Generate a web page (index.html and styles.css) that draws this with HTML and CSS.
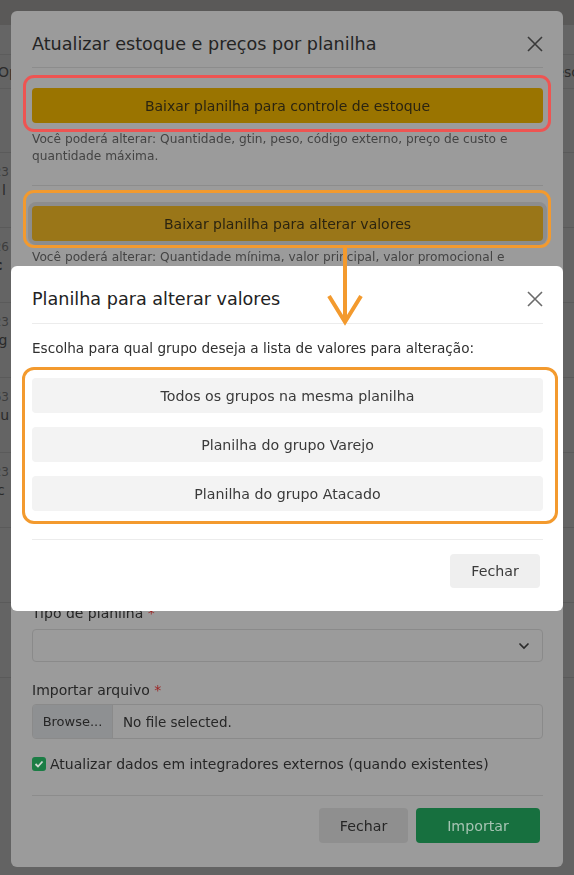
FILE: index.html
```html
<!DOCTYPE html>
<html lang="pt-BR">
<head>
<meta charset="utf-8">
<title>Atualizar estoque</title>
<link rel="stylesheet" href="styles.css">
</head>
<body>
<div class="page">
  <div class="topbar"></div>
  <div class="subbar"></div>
  <div class="thead"><span class="cell-left">Op</span><span class="cell-right">Desc</span></div>
  <div class="trow first"></div>
  <div class="trow"><span class="l1">123</span><span class="l2">de l</span></div>
  <div class="trow"><span class="l1">126</span><span class="l2 bold">Tic</span></div>
  <div class="trow"><span class="l1">123</span><span class="l2">Aug</span></div>
  <div class="trow"><span class="l1">163</span><span class="l2">AGu</span></div>
  <div class="trow"><span class="l1">123</span><span class="l2">Puc</span></div>
  <div class="trow"></div>
  <div class="trow"></div>
</div>

<div class="modal m1">
  <div class="m-header">
    <h5 class="m-title">Atualizar estoque e preços por planilha</h5>
    <svg class="x-icon" width="16" height="16" viewBox="0 0 16 16"><path d="M1 1L15 15M15 1L1 15" stroke="currentColor" stroke-width="1.6" fill="none"/></svg>
  </div>
  <div class="m1-body">
    <button class="btn-gold">Baixar planilha para controle de estoque</button>
    <p class="help">Você poderá alterar: Quantidade, gtin, peso, código externo, preço de custo e quantidade máxima.</p>
    <hr class="sep">
    <button class="btn-gold focus">Baixar planilha para alterar valores</button>
    <p class="help">Você poderá alterar: Quantidade mínima, valor principal, valor promocional e valor de custo do grupo.</p>
    <hr class="sep">
    <div class="hidden-gap"></div>
    <label class="lbl">Tipo de planilha <span class="req">*</span></label>
    <div class="select"><svg width="12" height="8" viewBox="0 0 12 8"><path d="M1.5 1.5L6 6L10.5 1.5" stroke="currentColor" stroke-width="1.6" fill="none"/></svg></div>
    <label class="lbl lbl2">Importar arquivo <span class="req">*</span></label>
    <div class="file"><span class="browse">Browse...</span><span class="nofile">No file selected.</span></div>
    <div class="check-row"><span class="check"><svg width="10" height="8" viewBox="0 0 10 8"><path d="M1.5 4L4 6.5L8.5 1.5" stroke="currentColor" stroke-width="1.8" fill="none"/></svg></span><span>Atualizar dados em integradores externos (quando existentes)</span></div>
  </div>
  <div class="m1-footer">
    <button class="btn-gray">Fechar</button>
    <button class="btn-green">Importar</button>
  </div>
</div>

<div class="modal m2">
  <div class="m-header m2-header">
    <h5 class="m-title t2">Planilha para alterar valores</h5>
    <svg class="x-icon x2" width="16" height="16" viewBox="0 0 16 16"><path d="M1 1L15 15M15 1L1 15" stroke="currentColor" stroke-width="1.6" fill="none"/></svg>
  </div>
  <div class="m2-body">
    <p class="choose">Escolha para qual grupo deseja a lista de valores para alteração:</p>
    <div class="options">
      <button class="opt">Todos os grupos na mesma planilha</button>
      <button class="opt">Planilha do grupo Varejo</button>
      <button class="opt">Planilha do grupo Atacado</button>
    </div>
  </div>
  <div class="m2-footer">
    <button class="btn-light">Fechar</button>
  </div>
</div>

<div class="mark mark-red"></div>
<div class="mark mark-orange1"></div>
<div class="mark mark-orange2"></div>
<svg class="arrow" width="40" height="80" viewBox="0 0 40 80"><path d="M20 0V74M4 49L20 75L36 49" stroke="#f39a2e" stroke-width="4" fill="none" stroke-linejoin="miter"/></svg>
</body>
</html>
```

FILE: styles.css
```css
* { box-sizing: border-box; }
html, body { margin: 0; padding: 0; }
body {
  width: 574px;
  height: 875px;
  overflow: hidden;
  font-family: "DejaVu Sans", "Open Sans", sans-serif;
  background: #636363;
  position: relative;
}
button { font-family: inherit; border: 0; cursor: pointer; }

/* background page */
.page { width: 574px; height: 875px; overflow: hidden; color: #3a3a3a; font-size: 13px; }
.topbar { height: 25px; background: #5a5958; }
.subbar { height: 30px; background: #656565; border-bottom: 1px solid #5c5c5c; }
.thead {
  height: 34px; display: flex; justify-content: space-between; align-items: center;
  border-bottom: 1px solid #5c5c5c; background: #646464; font-size: 14px; color: #2c2c2c;
}
.cell-left { margin-left: -2px; }
.cell-right { margin-right: -5px; }
.trow {
  height: 75px; border-bottom: 1px solid #5a5a5a; background: #646464;
  display: flex; flex-direction: column; padding-top: 10px; line-height: 18px;
}
.trow.first { height: 64px; }
.trow .l1 { font-size: 12px; color: #3c3c3c; margin-left: -14px; }
.trow .l2 { font-size: 14px; color: #2a2a2a; margin-left: -20px; }
.trow .l2.bold { font-weight: 700; }

/* modals */
.modal { position: fixed; left: 11px; width: 552px; border-radius: 6px; }
.m1 { top: 11px; height: 856px; background: #9b9b9b; display: flex; flex-direction: column; }
.m2 { top: 266px; height: 345px; background: #ffffff; display: flex; flex-direction: column; }

.m-header {
  height: 57px; margin: 0 20px 0 21px; border-bottom: 1px solid #8c8c8c;
  display: flex; align-items: center; justify-content: space-between; padding-top: 10px;
  flex-shrink: 0;
}
.m-title { margin: 0; font-weight: 400; font-size: 17.6px; color: #242424; line-height: 24px; }
.x-icon { color: #3a3a3a; }
.m2-header { border-bottom-color: #ececec; height: 58px; padding-top: 8px; }
.t2 { color: #222; font-size: 17.6px; }
.x2 { color: #6b6b6b; }

.m1-body { padding: 20px 20px 0 21px; display: flex; flex-direction: column; flex: 1; }
.btn-gold {
  height: 35px; width: 100%; border-radius: 4px; background: #9a7400; color: #2b2410;
  font-size: 14px; flex-shrink: 0;
}
.btn-gold.focus { background: #9a7618; box-shadow: 0 0 0 4px #8d8d8d; }
.help { margin: 8px 0 0; font-size: 12.2px; line-height: 17px; color: #444; max-width: 482px; }
.sep { border: 0; border-top: 1px solid #8c8c8c; margin: 20px 0 20px; }
.hidden-gap { height: 279px; flex-shrink: 0; }
.lbl { font-size: 14px; color: #262626; line-height: 20px; }
.req { color: #9c2424; }
.select {
  margin-top: 6px; height: 33px; border: 1px solid #8a8a8a; border-radius: 4px;
  display: flex; align-items: center; justify-content: flex-end; padding-right: 12px; color: #2a2a2a;
}
.lbl2 { margin-top: 18px; }
.file {
  margin-top: 4px; height: 35px; border: 1px solid #8a8a8a; border-radius: 4px;
  display: flex; align-items: stretch; overflow: hidden; font-size: 13.5px; color: #262626;
}
.browse { width: 80px; background: #8e9092; border-right: 1px solid #8a8a8a; display: flex; align-items: center; justify-content: center; font-size: 13px; }
.nofile { display: flex; align-items: center; padding-left: 10px; }
.check-row { margin-top: 15px; display: flex; align-items: center; gap: 4px; font-size: 14px; color: #262626; line-height: 20px; }
.check {
  width: 14px; height: 14px; border-radius: 3px; background: #1b7d45; color: #cfd8d2;
  display: flex; align-items: center; justify-content: center; flex-shrink: 0;
}
.m1-footer {
  margin: 0 20px 0 21px; border-top: 1px solid #8c8c8c; height: 72px; flex-shrink: 0;
  display: flex; justify-content: flex-end; align-items: flex-start; padding-top: 12px; padding-right: 3px; gap: 8px;
}
.btn-gray { width: 89px; height: 35px; border-radius: 4px; background: #8f8f8f; color: #262626; font-size: 14.2px; }
.btn-green { width: 124px; height: 35px; border-radius: 4px; background: #17703f; color: #a6c4b3; font-size: 14.2px; }

.m2-body { padding: 16px 20px 0 21px; flex: 1; }
.choose { margin: 0; font-size: 13.6px; line-height: 17px; color: #2f2f2f; white-space: nowrap; }
.options { margin-top: 21px; display: flex; flex-direction: column; gap: 14px; padding-bottom: 28px; border-bottom: 1px solid #ececec; }
.opt { height: 35px; border-radius: 4px; background: #f3f3f3; color: #3a3a3a; font-size: 14.2px; }
.m2-footer { height: 72px; display: flex; justify-content: flex-end; align-items: flex-start; padding: 14px 23px 0 0; }
.btn-light { width: 90px; height: 34px; border-radius: 4px; background: #efefef; color: #3a3a3a; font-size: 14.2px; }

/* annotations */
.mark { position: fixed; border-radius: 11px; }
.mark-red { left: 23px; top: 75px; width: 528px; height: 57px; border: 3px solid #ee5452; }
.mark-orange1 { left: 23px; top: 190px; width: 528px; height: 58px; border: 3px solid #f39a2e; }
.mark-orange2 { left: 22px; top: 367px; width: 536px; height: 157px; border: 3px solid #f39a2e; border-radius: 12px; }
.arrow { position: fixed; left: 325px; top: 247px; }
```
